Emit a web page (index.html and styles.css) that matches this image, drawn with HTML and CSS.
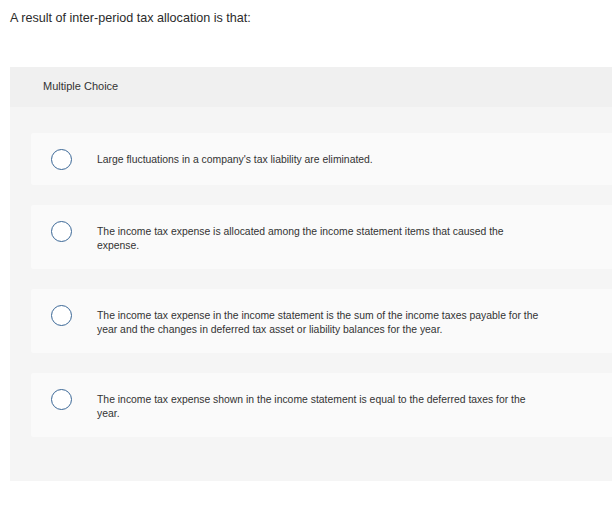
FILE: index.html
```html
<!DOCTYPE html>
<html>
<head>
<meta charset="utf-8">
<link rel="stylesheet" href="styles.css">
</head>
<body>
<div class="page">
  <p class="prompt">A result of inter-period tax allocation is that:</p>
  <div class="panel">
    <div class="panel-head">Multiple Choice</div>
    <div class="panel-body">
      <div class="option">
        <span class="radio"></span>
        <span class="label">Large fluctuations in a company's tax liability are eliminated.</span>
      </div>
      <div class="option">
        <span class="radio"></span>
        <span class="label">The income tax expense is allocated among the income statement items that caused the expense.</span>
      </div>
      <div class="option">
        <span class="radio"></span>
        <span class="label">The income tax expense in the income statement is the sum of the income taxes payable for the year and the changes in deferred tax asset or liability balances for the year.</span>
      </div>
      <div class="option">
        <span class="radio"></span>
        <span class="label">The income tax expense shown in the income statement is equal to the deferred taxes for the year.</span>
      </div>
    </div>
  </div>
</div>
</body>
</html>
```
FILE: styles.css
```css
html, body {
  margin: 0;
  padding: 0;
  background: #ffffff;
}
.page {
  width: 620px;
  padding: 0 0 0 10px;
  font-family: "Liberation Sans", Arial, sans-serif;
  color: #333333;
}
.prompt {
  margin: 0;
  padding-top: 10px;
  height: 67px;
  box-sizing: border-box;
  font-size: 12.6px;
  line-height: 16px;
  color: #2b2b2b;
}
.panel {
  background: #f5f5f5;
}
.panel-head {
  background: #f0f0f0;
  height: 40px;
  box-sizing: border-box;
  padding: 12px 0 0 33px;
  font-size: 11px;
  line-height: 14px;
  color: #333333;
}
.panel-body {
  padding: 26px 0 44px 21px;
  display: flex;
  flex-direction: column;
  gap: 20px;
}
.option {
  background: #fafafa;
  display: flex;
  align-items: flex-start;
  padding: 15px 0 15px 20px;
  border-radius: 2px;
}
.option:nth-child(n+2) {
  padding-bottom: 16px;
}
.radio {
  flex: none;
  width: 19px;
  height: 19px;
  border: 1.5px solid #3a6796;
  border-radius: 50%;
  background: #ffffff;
  margin-top: 1px;
}
.label {
  margin-left: 25px;
  padding-top: 5px;
  width: 448px;
  font-size: 10.4px;
  line-height: 14px;
  color: #333333;
}
```
